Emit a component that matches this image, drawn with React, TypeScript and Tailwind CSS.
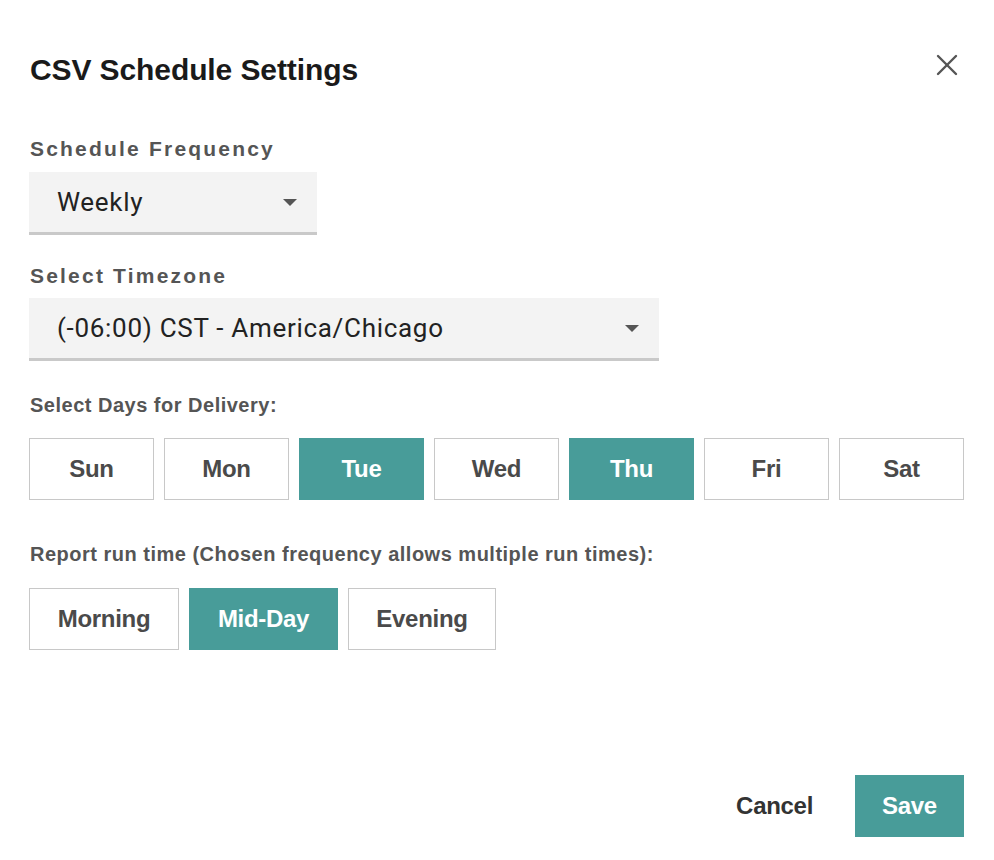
import React from "react";

const TEAL = "bg-[#489c99]";

function Caret() {
  return (
    <svg width="14" height="7" viewBox="0 0 14 7" className="shrink-0">
      <polygon points="0,0 14,0 7,7" fill="#555555" />
    </svg>
  );
}

function Select({ value, width }: { value: string; width: string }) {
  return (
    <div
      className={`${width} h-[63px] bg-[#f3f3f3] border-b-[3px] border-[#c9c9c9] flex items-center justify-between pl-[28px] pr-[20px]`}
    >
      <span
        className="text-[26px] tracking-[0.7px] text-[#222] leading-none"
        style={{ fontFamily: "Roboto, sans-serif" }}
      >
        {value}
      </span>
      <Caret />
    </div>
  );
}

function Toggle({ label, active, width }: { label: string; active?: boolean; width: string }) {
  return (
    <button
      className={`${width} h-[62px] flex items-center justify-center text-[24px] font-bold tracking-[-0.3px] ${
        active ? `${TEAL} text-white border border-[#489c99]` : "bg-white text-[#4a4a4a] border border-[#c8c8c8]"
      }`}
    >
      {label}
    </button>
  );
}

export default function App() {
  const days = ["Sun", "Mon", "Tue", "Wed", "Thu", "Fri", "Sat"];
  const activeDays = ["Tue", "Thu"];
  return (
    <div
      className="w-[994px] h-[860px] bg-white pl-[29px] pr-[30px] pt-[53px] flex flex-col"
      style={{ fontFamily: '"Liberation Sans", Arial, sans-serif' }}
    >
      <div className="flex justify-between items-start">
        <h1 className="text-[30px] leading-[34px] font-bold text-[#1a1a1a] pl-[1px] tracking-[-0.1px]">
          CSV Schedule Settings
        </h1>
        <button className="mt-[1px] mr-[6px]" aria-label="Close">
          <svg width="22" height="22" viewBox="0 0 22 22">
            <line x1="2" y1="2" x2="20" y2="20" stroke="#555" strokeWidth="2.4" strokeLinecap="round" />
            <line x1="20" y1="2" x2="2" y2="20" stroke="#555" strokeWidth="2.4" strokeLinecap="round" />
          </svg>
        </button>
      </div>

      <div className="mt-[50px] text-[21px] leading-[24px] font-bold text-[#555] tracking-[2.2px] pl-[1px]">
        Schedule Frequency
      </div>
      <div className="mt-[11px]">
        <Select value="Weekly" width="w-[288px]" />
      </div>

      <div className="mt-[29px] text-[21px] leading-[24px] font-bold text-[#555] tracking-[2.2px] pl-[1px]">
        Select Timezone
      </div>
      <div className="mt-[10px]">
        <Select value="(-06:00) CST - America/Chicago" width="w-[630px]" />
      </div>

      <div className="mt-[32px] text-[20px] leading-[24px] font-bold text-[#555] tracking-[0.5px] pl-[1px]">
        Select Days for Delivery:
      </div>
      <div className="mt-[21px] flex gap-[10px]">
        {days.map((d) => (
          <Toggle key={d} label={d} active={activeDays.includes(d)} width="w-[125px]" />
        ))}
      </div>

      <div className="mt-[42px] text-[20px] leading-[24px] font-bold text-[#555] tracking-[0.5px] pl-[1px]">
        Report run time (Chosen frequency allows multiple run times):
      </div>
      <div className="mt-[22px] flex gap-[10px]">
        <Toggle label="Morning" width="w-[150px]" />
        <Toggle label="Mid-Day" active width="w-[149px]" />
        <Toggle label="Evening" width="w-[148px]" />
      </div>

      <div className="mt-[125px] flex justify-end items-center gap-[22px]">
        <button className="h-[62px] px-[20px] text-[24px] font-bold text-[#333] tracking-[-0.3px]">Cancel</button>
        <button className={`w-[109px] h-[62px] ${TEAL} text-white text-[24px] font-bold tracking-[-0.3px]`}>
          Save
        </button>
      </div>
    </div>
  );
}
